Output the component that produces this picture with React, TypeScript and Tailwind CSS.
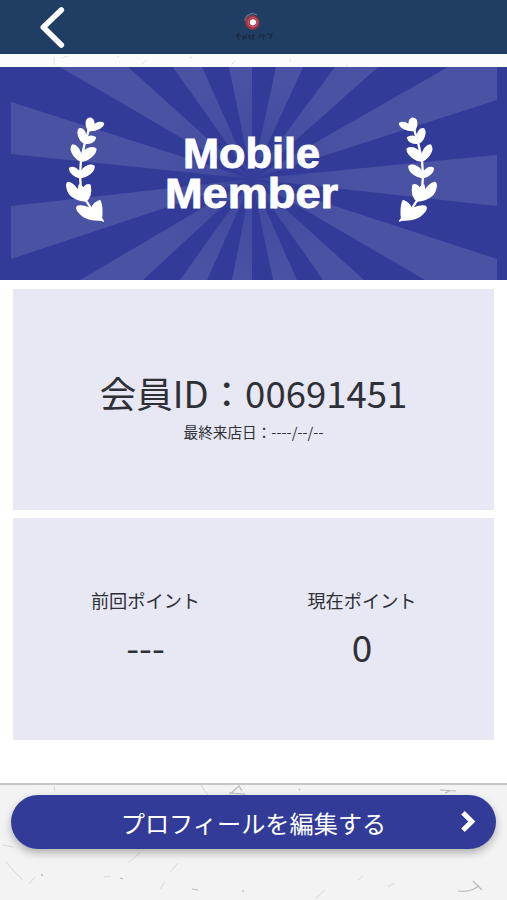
import React from "react";

const RAYS = [
  "252,112 60,0 128,0",
  "252,112 173,0 202,0",
  "252,112 229,0 252,0",
  "252,112 276,0 303,0",
  "252,112 335,0 378,0",
  "252,112 448,0 497,0 497,33",
  "252,112 497,88 497,139",
  "252,112 497,192 497,213 425,213",
  "252,112 364,213 323,213",
  "252,112 297,213 273,213",
  "252,112 252,213 232,213",
  "252,112 207,213 180,213",
  "252,112 143,213 80,213",
  "252,112 11,192 11,139",
  "252,112 11,87 11,35",
];

function Rays() {
  return (
    <svg className="absolute inset-0" width="507" height="213" viewBox="0 0 507 213">
      <defs>
        <radialGradient id="ray" gradientUnits="userSpaceOnUse" cx="252" cy="112" r="100">
          <stop offset="0" stopColor="#343e99" />
          <stop offset="0.3" stopColor="#414b9f" />
          <stop offset="1" stopColor="#4a52a4" />
        </radialGradient>
      </defs>
      {RAYS.map((points) => (
        <polygon key={points} points={points} fill="url(#ray)" />
      ))}
    </svg>
  );
}

function Laurel({ className }: { className?: string }) {
  return (
    <svg className={className} width="80" height="130" viewBox="0 0 240 390" fill="#fff" stroke="#fff" strokeWidth="5" strokeLinejoin="round">
      <path
        d="M116 76 L105 112 L93 165 L90 212 L94 270 L111 291 L128 318 L155 346"
        fill="none"
        strokeWidth="7"
      />
      <path d="M115 76 C105 60 108 41 120 40 C131 41 135 57 128 67 C137 52 152 50 160 55 C160 66 138 79 115 76Z" />
      <path d="M104 114 C88 107 80 82 88 72 C99 68 110 86 107 102 C113 92 128 92 136 98 C134 109 121 116 104 114Z" />
      <path d="M93 168 C70 158 58 132 68 120 C81 121 94 140 92 156 C99 133 125 124 137 132 C138 147 114 167 93 168Z" />
      <path d="M90 218 C73 214 60 203 59 190 C69 183 87 195 91 208 C96 187 121 176 132 184 C131 202 108 217 90 218Z" />
      <path d="M107 288 C79 286 56 272 52 250 C49 239 51 233 56 233 C67 235 79 248 84 260 L88 240 C94 240 96 245 100 252 C104 240 115 237 120 241 C124 261 118 279 107 288Z" />
      <path d="M154 344 C127 346 102 339 89 324 C80 315 78 307 84 304 C98 302 115 307 123 314 C128 300 140 290 149 287 C156 297 156 327 154 341 L160 348Z" />
    </svg>
  );
}

const FAINT_FIBERS =
  "M201 0q3 6 8 11M3 60l10 2M6 77q8 10 17 18M128 78l12-10M178 78l-8 9M165 97l-5 7M315 114l10-9M35 92l-6 7M428 117l4 7M490 25l5-3M104 92l7-1M358 95l5-4M54 1l1 5M388 102l6-4";
const DARK_FIBERS =
  "M229 8l16 1M230 9l9-8l3 5M440 5l16 1M445 8l5-2M458 106q8 1 13-1q6-2 8-5M473 96l9 9M192 118l6 1M41 89l2 2M243 122h2M120 93l3 1M299 4l1 1M192 104l6 1M242 106h2";

export default function App() {
  return (
    <div className="flex h-[900px] w-[507px] flex-col overflow-hidden bg-white font-['Noto_Sans_CJK_JP',sans-serif] text-[#2f3036]">
      <header className="flex h-[54px] shrink-0 items-start bg-[#203d63]">
        <svg width="507" height="54" viewBox="0 0 507 54">
          <path d="M61.3 10L43.3 27.3L61.3 45" fill="none" stroke="#fff" strokeWidth="5.6" strokeLinecap="round" strokeLinejoin="round" />
          <circle cx="252.4" cy="22.5" r="7.2" fill="#a63244" />
          <path d="M244.8 21A8 8 0 0 1 257 15" fill="none" stroke="#69708a" strokeWidth="1.2" />
          <circle cx="252.8" cy="22.3" r="4.6" fill="none" stroke="#c97380" strokeWidth=".8" />
          <circle cx="253" cy="22.3" r="3.1" fill="#fff" />
          <g fill="none" stroke="#1a2f47" strokeWidth="1.6">
            <path d="M239 33l-2 3l2 4M237 36h4M243 35v4l3-3v3M248 35l3 4M251 35l-2 4M253 34v6M252 36h3M261 34l-2 4M260 36h5M263 34v6M267 34h5l-2 5" />
          </g>
        </svg>
      </header>
      <div className="h-[13px] shrink-0 bg-[#fcfcfc]">
        <svg width="507" height="13" viewBox="0 0 507 13" fill="none" stroke="#dedede" strokeWidth=".8">
          <path d="M54 3v8M117 2l2 1M189 4l3-1M232 10l3-3M290 5v3M346 12h2M62 4l6-2M142 10l5-4" />
        </svg>
      </div>

      <section className="relative flex h-[213px] shrink-0 justify-center bg-[#323c98]">
        <Rays />
        <div className="relative flex w-full items-start pl-[50px] pt-[38px] text-white">
          <Laurel />
          <h1 className="mt-[29px] flex w-[243px] flex-col items-center font-['Liberation_Sans',sans-serif] text-[42px] font-bold leading-[40px] [-webkit-text-stroke:0.9px_#fff]">
            <span className="scale-x-[1.03]">Mobile</span>
            <span className="scale-x-[1.075]">Member</span>
          </h1>
          <Laurel className="-scale-x-100" />
        </div>
      </section>

      <main className="flex h-[503px] shrink-0 flex-col gap-[8px] px-[13px] pt-[9px]">
        <section className="flex h-[221px] flex-col items-center bg-[#e7e8f4] pt-[77px]">
          <p className="whitespace-nowrap text-[36.5px] leading-[54px]">会員ID：00691451</p>
          <p className="mt-px whitespace-nowrap text-[14.65px] leading-[22px]">最終来店日：----/--/--</p>
        </section>
        <section className="grid h-[222px] grid-cols-[265px_168px] bg-[#e7e8f4] pt-[68px] text-center">
          <div>
            <p className="text-[18.2px] leading-[28px]">前回ポイント</p>
            <p className="mt-[5px] text-[37px] leading-[54px]">---</p>
          </div>
          <div>
            <p className="text-[18.2px] leading-[28px]">現在ポイント</p>
            <p className="mt-[5px] text-[37px] leading-[54px]">0</p>
          </div>
        </section>
      </main>

      <footer className="relative flex h-[117px] shrink-0 items-start border-t-2 border-[#c5c5c5] bg-[#f3f3f3] px-[11px] pt-[10px]">
        <svg className="absolute inset-0" width="507" height="115" viewBox="0 0 507 115" fill="none">
          <path d={FAINT_FIBERS} stroke="#d8d8d8" strokeWidth="1" />
          <path d={DARK_FIBERS} stroke="#bbbbbb" strokeWidth="1.2" />
        </svg>
        <button className="relative flex h-[54px] w-[486px] items-center justify-center rounded-full bg-[#323c98] text-white shadow-[0_4px_8px_rgba(0,0,0,0.28)]">
          <span className="whitespace-nowrap pt-px text-[24.2px] leading-[36px]">プロフィールを編集する</span>
          <svg className="absolute right-[20px] top-[15px]" width="16" height="23" viewBox="0 0 16 23" fill="none">
            <path d="M3 2.7L11.8 11.5L3 20.3" stroke="#fff" strokeWidth="5" />
          </svg>
        </button>
      </footer>
    </div>
  );
}
